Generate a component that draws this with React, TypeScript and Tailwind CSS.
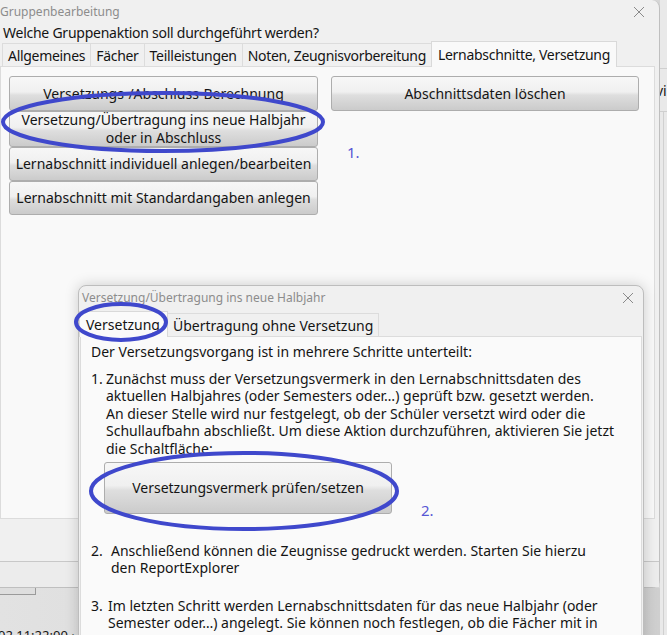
import React from 'react';

const UI = "font-['Noto_Sans','Open_Sans',sans-serif]";

const btn =
  'flex items-center justify-center text-center rounded-[3px] border border-[#adadad] bg-[linear-gradient(180deg,#f7f7f7_0%,#f0f0f0_45%,#dedede_55%,#cbcbcb_100%)] text-[14px] leading-[18px] text-[#141414]';

const CloseX = () => (
  <svg width="12" height="12" viewBox="0 0 12 12" className="stroke-[#8a8a8a]">
    <path d="M1 1 L11 11 M11 1 L1 11" strokeWidth="1" fill="none" />
  </svg>
);

type TabProps = { label: string; active?: boolean };

const Tab = ({ label, active }: TabProps) =>
  active ? (
    <div className="relative z-10 -mb-px flex h-[26px] items-center border border-b-0 border-[#d9d9d9] bg-[#f9f9f9] px-[6px] text-[14px] text-[#141414]">
      {label}
    </div>
  ) : (
    <div className="mt-[2px] flex h-[23px] items-center border border-b-0 border-r-0 border-[#dcdcdc] bg-[#f0f0f0] px-[5px] text-[14px] text-[#141414]">
      {label}
    </div>
  );

const MainWindow = () => (
  <div className="flex h-[588px] w-[660px] flex-col rounded-r-[8px] border-r border-b border-[#bfbfbf] bg-[#f0f0f0]">
    <div className="flex h-[24px] items-center justify-between pr-[14px]">
      <span className="text-[12px] text-[#8c8c8c]">Gruppenbearbeitung</span>
      <CloseX />
    </div>
    <div className="h-[17px] pl-[3px] text-[14px] leading-[17px] tracking-[-0.25px] text-[#141414]">
      Welche Gruppenaktion soll durchgeführt werden?
    </div>
    <div className="flex items-end pl-[2px] tracking-[-0.3px]">
      <Tab label="Allgemeines" />
      <Tab label="Fächer" />
      <Tab label="Teilleistungen" />
      <Tab label="Noten, Zeugnisvorbereitung" />
      <Tab label="Lernabschnitte, Versetzung" active />
    </div>
    <div className="mr-[4px] flex h-[453px] gap-[13px] border border-[#dcdcdc] bg-[#f9f9f9] pl-[8px] pt-[9px]">
      <div className="flex w-[309px] flex-col">
        <div className={`${btn} h-[35px] text-[#8a8a8a]`}>Versetzungs-/Abschluss-Berechnung</div>
        <div className={`${btn} h-[36px]`}>
          Versetzung/Übertragung ins neue Halbjahr
          <br />
          oder in Abschluss
        </div>
        <div className={`${btn} h-[34px]`}>Lernabschnitt individuell anlegen/bearbeiten</div>
        <div className={`${btn} h-[34px]`}>Lernabschnitt mit Standardangaben anlegen</div>
      </div>
      <div className={`${btn} h-[35px] w-[308px]`}>Abschnittsdaten löschen</div>
    </div>
    <div className="flex h-[43px] justify-end border-b border-[#c8c8c8] pr-[12px] pt-[6px]">
      <div className="h-[32px] w-[4px] border-l border-[#c4c4c4]" />
    </div>
    <div className="flex-1 bg-[#ececec]" />
  </div>
);

// window sitting behind the group dialog on the right
const BackWindow = () => (
  <div className="flex w-[7px] flex-col overflow-hidden bg-[#e9e9e9]">
    <div className="h-[68px]" />
    <div className="flex h-[44px] items-center border-y border-[#cfcfcf] text-[14px] text-[#141414]">
      <span className="-ml-[4px]">vil</span>
    </div>
    <div className="ml-[3px] flex-1 border-l border-[#d0d0d0]" />
  </div>
);

const Step = ({ n, children, indent }: { n: string; children: React.ReactNode; indent: string }) => (
  <div className="flex">
    <span className={indent}>{n}</span>
    <div>{children}</div>
  </div>
);

const TransferDialog = () => (
  <div className="absolute left-[78px] top-[285px] flex h-[360px] w-[566px] flex-col rounded-t-[8px] border border-[#bdbdbd] bg-[#f0f0f0] shadow-[0_0_14px_rgba(0,0,0,0.18)]">
    <div className="flex h-[24px] items-center justify-between pl-[3px] pr-[9px]">
      <span className="text-[12px] text-[#8c8c8c]">Versetzung/Übertragung ins neue Halbjahr</span>
      <CloseX />
    </div>
    <div className="flex h-[26px] items-end">
      <div className="relative z-10 -mb-px flex h-[26px] w-[89px] items-center border border-b-0 border-[#d9d9d9] bg-[#fafafa] pl-[6px] text-[14px] text-[#141414]">
        Versetzung
      </div>
      <div className="flex h-[23px] items-center border border-b-0 border-l-0 border-[#dcdcdc] bg-[#f0f0f0] px-[5px] text-[14px] text-[#141414]">
        Übertragung ohne Versetzung
      </div>
    </div>
    <div className="mx-px flex-1 border border-[#dcdcdc] bg-[#fafafa] pl-[10px] pt-[6px] text-[14px] leading-[17.6px] text-[#141414]">
      <p>Der Versetzungsvorgang ist in mehrere Schritte unterteilt:</p>
      <div className="mt-[9px]">
        <Step n="1." indent="w-[15px]">
          <p>
            Zunächst muss der Versetzungsvermerk in den Lernabschnittsdaten des
            <br />
            aktuellen Halbjahres (oder Semesters oder…) geprüft bzw. gesetzt werden.
            <br />
            An dieser Stelle wird nur festgelegt, ob der Schüler versetzt wird oder die
            <br />
            Schullaufbahn abschließt. Um diese Aktion durchzuführen, aktivieren Sie jetzt
            <br />
            die Schaltfläche:
          </p>
          <div className={`${btn} -ml-[2px] mt-[4px] h-[52px] w-[288px]`}>Versetzungsvermerk prüfen/setzen</div>
        </Step>
      </div>
      <div className="mt-[28px]">
        <Step n="2." indent="w-[20px]">
          Anschließend können die Zeugnisse gedruckt werden. Starten Sie hierzu
          <br />
          den ReportExplorer
        </Step>
      </div>
      <div className="mt-[20px]">
        <Step n="3." indent="w-[17px]">
          Im letzten Schritt werden Lernabschnittsdaten für das neue Halbjahr (oder
          <br />
          Semester oder…) angelegt. Sie können noch festlegen, ob die Fächer mit in
        </Step>
      </div>
    </div>
  </div>
);

// hand-drawn markers on top of everything
const Markers = () => (
  <>
    <svg className="pointer-events-none absolute inset-0 z-20" width="667" height="635">
      <g fill="none" stroke="#3f48cc" strokeWidth="4">
        <ellipse cx="163" cy="122" rx="160" ry="29" />
        <ellipse cx="121" cy="322" rx="45" ry="18" />
        <ellipse cx="244" cy="491" rx="153" ry="38" />
      </g>
    </svg>
    <span className="absolute left-[347px] top-[141px] z-20 text-[15px] text-[#5656d4]">1.</span>
    <span className="absolute left-[421px] top-[499px] z-20 text-[15px] text-[#5656d4]">2.</span>
  </>
);

export default function App() {
  return (
    <div className={`relative h-[635px] w-[667px] overflow-hidden bg-[#d6d6d6] ${UI}`}>
      <div className="flex">
        <div className="flex w-[660px] flex-col">
          <MainWindow />
          <div className="h-[47px] bg-[linear-gradient(90deg,#e2e2e2,#cfcfcf)]">
            <div className="h-[7px] w-[36px] border-b border-r border-[#9a9a9a] bg-[#dedede]" />
            <div className="-ml-[2px] mt-[33px] text-[13px] leading-[14px] text-[#141414]">02 11:22:00 ·</div>
          </div>
        </div>
        <BackWindow />
      </div>
      <TransferDialog />
      <Markers />
    </div>
  );
}
